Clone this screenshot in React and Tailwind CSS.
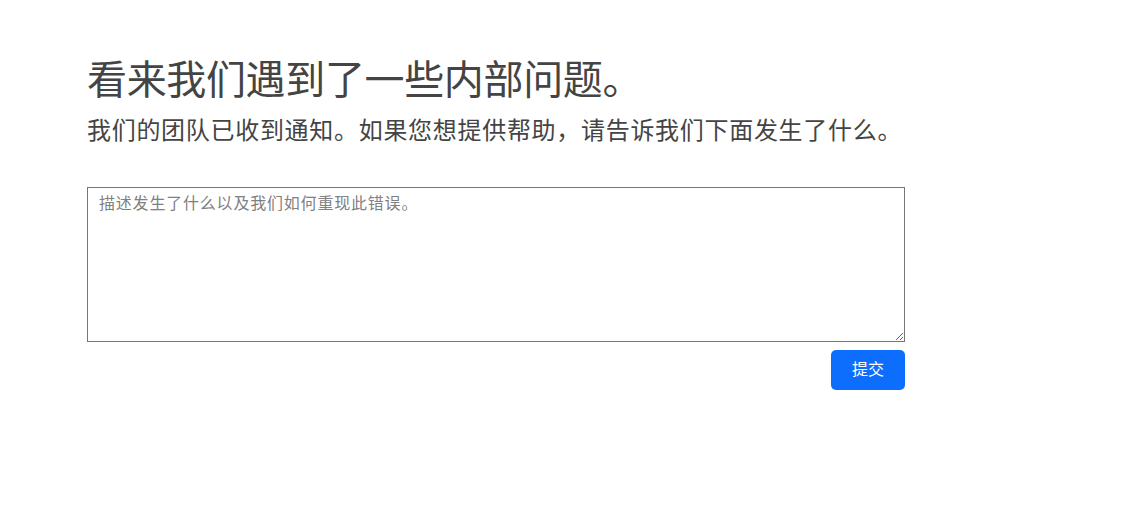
export default function App() {
  return (
    <div className="min-h-screen bg-white font-['Liberation_Sans','Noto_Sans_CJK_SC',sans-serif] text-[#444]">
      <div className="pl-[87px] pt-[56px] w-[905px]">
        <h1 className="text-[40px] leading-[48px] font-normal tracking-[-0.35px]">看来我们遇到了一些内部问题。</h1>
        <h2 className="mt-[12px] text-[24px] leading-[29px] font-normal tracking-[0.7px]">
          我们的团队已收到通知。如果您想提供帮助，请告诉我们下面发生了什么。
        </h2>
        <div className="mt-[42px] flex flex-col">
          <textarea
            placeholder="描述发生了什么以及我们如何重现此错误。"
            className="w-[818px] h-[155px] border border-[#767676] px-[11px] pt-[4px] pb-[6px] text-[16px] leading-[24px] tracking-[0.8px] text-[#333] placeholder:text-[#808080] outline-none resize-y"
          />
          <div className="mt-[8px] flex justify-end">
            <button className="w-[74px] h-[40px] rounded-[5px] bg-[#0d6efd] text-white text-[16px] leading-[24px]">
              提交
            </button>
          </div>
        </div>
      </div>
    </div>
  );
}
